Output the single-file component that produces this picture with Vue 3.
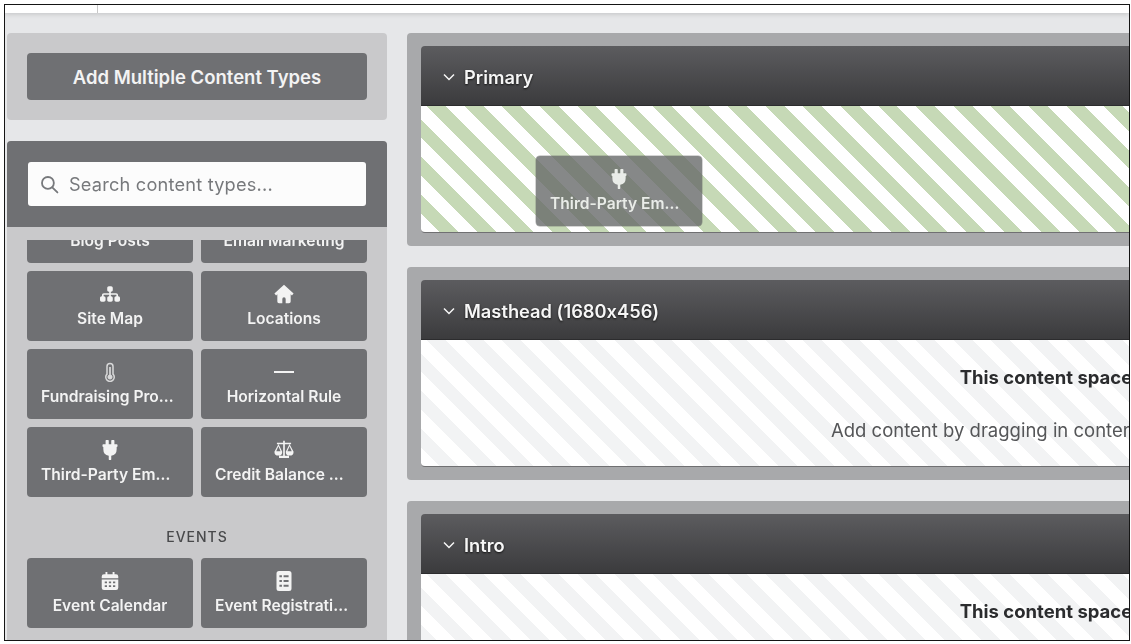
<script setup>
const icons = {
  sitemap: { box: '0 0 576 512', d: 'M208 80c0-26.5 21.5-48 48-48h64c26.5 0 48 21.5 48 48v64c0 26.5-21.5 48-48 48h-8v40H464c30.9 0 56 25.1 56 56v32h8c26.5 0 48 21.5 48 48v64c0 26.5-21.5 48-48 48H464c-26.5 0-48-21.5-48-48V368c0-26.5 21.5-48 48-48h8V288c0-4.4-3.6-8-8-8H312v40h8c26.5 0 48 21.5 48 48v64c0 26.5-21.5 48-48 48H256c-26.5 0-48-21.5-48-48V368c0-26.5 21.5-48 48-48h8V280H112c-4.4 0-8 3.6-8 8v32h8c26.5 0 48 21.5 48 48v64c0 26.5-21.5 48-48 48H48c-26.5 0-48-21.5-48-48V368c0-26.5 21.5-48 48-48h8V288c0-30.9 25.1-56 56-56H264V192h-8c-26.5 0-48-21.5-48-48V80z' },
  house: { box: '0 0 24 24', d: 'M12 1 .5 11.500 2.500 13.700l1.500-1.300V21a2 2 0 0 0 2 2h12a2 2 0 0 0 2-2v-8.600l1.500 1.300 2-2.200zM10 23v-5a2 2 0 0 1 4 0v5z' },
  thermo: { box: '0 0 24 24', d: 'M12 1a4.5 4.5 0 0 0-4.5 4.5v8.7a6 6 0 1 0 9 0V5.500A4.500 4.500 0 0 0 12 1zm0 1.800a2.700 2.700 0 0 1 2.700 2.700v9.500a4.200 4.200 0 1 1-5.400 0V5.500A2.700 2.700 0 0 1 12 2.800zM11 6v9.200a3 3 0 1 0 2 0V6z' },
  minus: { box: '0 0 24 24', d: 'M0 10.800h24v2.400H0z' },
  plug: { box: '0 0 24 24', d: 'M7.500 0h2.200a.8.8 0 0 1 .8.800V5h3V.8a.8.8 0 0 1 .8-.8h2.200a.8.8 0 0 1 .8.800V5H20a1 1 0 0 1 1 1v1.500a1 1 0 0 1-1 1v2.500a8 8 0 0 1-6.500 7.900V23a1 1 0 0 1-1 1h-1a1 1 0 0 1-1-1v-4.100A8 8 0 0 1 4 11V8.500a1 1 0 0 1-1-1V6a1 1 0 0 1 1-1h2.700V.8a.8.8 0 0 1 .8-.8z' },
  scale: { box: '0 0 24 24', d: 'M11 1h2v2.300h7.500v1.700h-1.800L23.500 14a4.700 4.700 0 0 1-9.400 0L18.500 5H13v14h5v2.500H6V19h5V5H5.500l4.400 9a4.700 4.700 0 0 1-9.400 0L5.300 5H3.500V3.300H11zM5.300 7.600 2.700 13.500h5.200zm13.400 0-2.600 5.900h5.200z' },
  calendar: { box: '-1.300 -1.300 26.600 26.600', d: 'M6 0h2.500v3h7V0H18v3h2a3 3 0 0 1 3 3v2.500H1V6a3 3 0 0 1 3-3h2zM1 10h22v11a3 3 0 0 1-3 3H4a3 3 0 0 1-3-3zm4 2.500v2.500h3v-2.500zm5.500 0v2.500h3v-2.500zm5.500 0v2.500h3v-2.500zM5 17.500V20h3v-2.500zm5.500 0V20h3v-2.500zm5.500 0V20h3v-2.500z' },
  list: { box: '0 0 24 24', d: 'M6 0h12a3 3 0 0 1 3 3v18a3 3 0 0 1-3 3H6a3 3 0 0 1-3-3V3a3 3 0 0 1 3-3zm.5 5v2.500h3V5zm5 0v2.500h6V5zm-5 5.700v2.500h3v-2.500zm5 0v2.500h6v-2.500zm-5 5.700v2.500h3v-2.500zm5 0v2.500h6v-2.500z' }
}

const tiles = [
  { label: 'Blog Posts', icon: 'list' },
  { label: 'Email Marketing', icon: 'list' },
  { label: 'Site Map', icon: 'sitemap' },
  { label: 'Locations', icon: 'house' },
  { label: 'Fundraising Progress', icon: 'thermo' },
  { label: 'Horizontal Rule', icon: 'minus' },
  { label: 'Third-Party Embed', icon: 'plug' },
  { label: 'Credit Balance Summary', icon: 'scale' }
]

const eventTiles = [
  { label: 'Event Calendar', icon: 'calendar' },
  { label: 'Event Registrations', icon: 'list' }
]

const sections = [
  { title: 'Primary', filled: true },
  { title: 'Masthead (1680x456)', filled: false },
  { title: 'Intro', filled: false }
]
</script>

<template>
  <div class="page">
    <div class="frame">
      <header class="topbar"><span class="topcell"></span></header>
      <div class="workspace">
        <aside class="sidebar">
          <div class="add-panel">
            <button class="add-btn">Add Multiple Content Types</button>
          </div>
          <div class="types-panel">
            <div class="search-head">
              <div class="search">
                <svg class="search-icon" viewBox="0 0 24 24" fill="none" stroke="currentColor" stroke-width="2.300" stroke-linecap="round">
                  <circle cx="10" cy="10" r="7.500" />
                  <path d="m15.500 15.500 6.500 6.500" />
                </svg>
                <span>Search content types...</span>
              </div>
            </div>
            <div class="scroller">
              <div class="tile-grid first">
                <div v-for="t in tiles" :key="t.label" class="tile">
                  <svg class="tile-icon" :class="t.icon" :viewBox="icons[t.icon].box"><path :d="icons[t.icon].d" fill-rule="evenodd" /></svg>
                  <span class="tile-label">{{ t.label }}</span>
                </div>
              </div>
              <div class="group-title">EVENTS</div>
              <div class="tile-grid">
                <div v-for="t in eventTiles" :key="t.label" class="tile">
                  <svg class="tile-icon" :viewBox="icons[t.icon].box"><path :d="icons[t.icon].d" fill-rule="evenodd" /></svg>
                  <span class="tile-label">{{ t.label }}</span>
                </div>
              </div>
            </div>
          </div>
        </aside>
        <main class="main">
          <section v-for="s in sections" :key="s.title" class="space">
            <div class="space-head">
              <svg class="chevron" viewBox="0 0 12 8" fill="none" stroke="currentColor" stroke-width="1.500"><path d="m1 1.500 5 5 5-5" /></svg>
              <span>{{ s.title }}</span>
            </div>
            <div class="space-body" :class="{ filled: s.filled }">
              <div v-if="s.filled" class="tile ghost">
                <svg class="tile-icon" :viewBox="icons.plug.box"><path :d="icons.plug.d" /></svg>
                <span class="tile-label">Third-Party Embed</span>
              </div>
              <template v-else>
                <p class="strong">This content space is empty</p>
                <p class="hint">Add content by dragging in content types from the sidebar</p>
              </template>
            </div>
          </section>
        </main>
      </div>
    </div>
  </div>
</template>

<style>
html, body { margin: 0; background: #fff; overflow: hidden; }
</style>

<style scoped>
.page {
  width: 1131px;
  height: 644px;
  padding: 4px 1px 3px 4px;
  box-sizing: border-box;
  font-family: Inter, "Liberation Sans", sans-serif;
  font-feature-settings: "calt" 0;
  overflow: hidden;
}
.frame {
  height: 100%;
  box-sizing: border-box;
  border: 1px solid #151515;
  background: #e6e7e9;
  overflow: hidden;
  display: flex;
  flex-direction: column;
}
.topbar {
  flex: none;
  height: 8px;
  background: #fff;
  box-shadow: 0 1px 5px rgba(0, 0, 0, .16);
  position: relative;
}
.topcell {
  display: block;
  width: 92px;
  height: 8px;
  border-right: 1px solid #c8c8c8;
}
.workspace {
  flex: 1;
  min-height: 0;
  display: flex;
  gap: 20px;
  padding: 20px 0 0 2px;
  filter: blur(.45px);
}
.sidebar {
  flex: none;
  width: 380px;
  display: flex;
  flex-direction: column;
  gap: 21px;
}
.add-panel {
  flex: none;
  padding: 20px;
  background: #c9c9cb;
  border-radius: 4px;
}
.add-btn {
  display: block;
  width: 100%;
  height: 47px;
  border: 0;
  padding: 0;
  border-radius: 4px;
  background: #6f7073;
  color: #f3f3f3;
  font: 600 18.500px Inter, "Liberation Sans", sans-serif;
}
.types-panel {
  flex: 1;
  min-height: 0;
  display: flex;
  flex-direction: column;
  background: #c9c9cb;
  border-radius: 4px 4px 0 0;
  overflow: hidden;
}
.search-head {
  flex: none;
  height: 86px;
  box-sizing: border-box;
  padding: 21px 21px 0;
  background: #6f7073;
}
.search {
  height: 44px;
  display: flex;
  align-items: center;
  gap: 10px;
  padding-left: 12px;
  background: #fcfcfc;
  border-radius: 3px;
  color: #77797c;
  font-size: 18.200px;
  letter-spacing: .2px;
  line-height: 42px;
}
.search-icon {
  width: 19px;
  height: 19px;
  flex: none;
}
.scroller {
  flex: 1;
  min-height: 0;
  margin-top: 13px;
  overflow: hidden;
}
.tile-grid {
  display: grid;
  grid-template-columns: 166px 166px;
  gap: 8px;
  padding: 0 20px;
}
.tile-grid.first { margin-top: -47px; }
.tile {
  height: 70px;
  box-sizing: border-box;
  padding: 13px 14px 0;
  display: flex;
  flex-direction: column;
  align-items: center;
  gap: 5px;
  background: #6f7073;
  border-radius: 4px;
  color: #f3f3f3;
}
.tile-icon {
  flex: none;
  width: 20px;
  height: 20px;
  fill: currentColor;
}
.tile-icon.thermo { opacity: .8; }
.tile-label {
  max-width: 100%;
  font-size: 15.600px;
  font-weight: 600;
  line-height: 20px;
  white-space: nowrap;
  overflow: hidden;
  text-overflow: ellipsis;
}
.group-title {
  margin: 30px 0 11px;
  height: 20px;
  line-height: 20px;
  text-align: center;
  font-size: 14px;
  font-weight: 500;
  letter-spacing: 1px;
  color: #48494b;
}
.main {
  flex: none;
  width: 1360px;
  display: flex;
  flex-direction: column;
  gap: 21px;
}
.space {
  flex: none;
  height: 213px;
  box-sizing: border-box;
  padding: 13px 14px;
  background: #a8a9ab;
  border-radius: 4px;
}
.space-head {
  height: 60px;
  box-sizing: border-box;
  display: flex;
  align-items: center;
  gap: 9px;
  padding: 2px 0 0 22px;
  border-bottom: 1px solid #2c2c2e;
  border-radius: 4px 4px 0 0;
  background: linear-gradient(#5c5c5f, #3b3b3d);
  color: #f6f6f6;
  font-size: 18.300px;
  font-weight: 600;
  text-shadow: 0 1px 2px #111;
}
.chevron {
  width: 12px;
  height: 8px;
  flex: none;
}
.space-body {
  position: relative;
  height: 127px;
  box-sizing: border-box;
  padding-top: 26px;
  overflow: hidden;
  text-align: center;
  border-bottom: 1px solid #707072;
  border-radius: 0 0 4px 4px;
  background: repeating-linear-gradient(45deg, #fff 0 13.300px, #f2f3f4 13.300px 26.600px);
}
.space-body.filled {
  background: repeating-linear-gradient(45deg, #fff 0 13.300px, #c6d9b6 13.300px 26.600px);
}
.strong {
  margin: 0;
  height: 22px;
  line-height: 22px;
  font-size: 18.500px;
  font-weight: 700;
  color: #2b2c2e;
}
.hint {
  margin: 31px 0 0;
  height: 22px;
  line-height: 22px;
  font-size: 18.500px;
  color: #555658;
}
.ghost {
  position: absolute;
  left: 115px;
  top: 50px;
  width: 166px;
  background: rgba(104, 106, 106, .8);
  color: #e9ece8;
  box-shadow: 0 0 0 .5px rgba(90, 90, 90, .5);
}
</style>
